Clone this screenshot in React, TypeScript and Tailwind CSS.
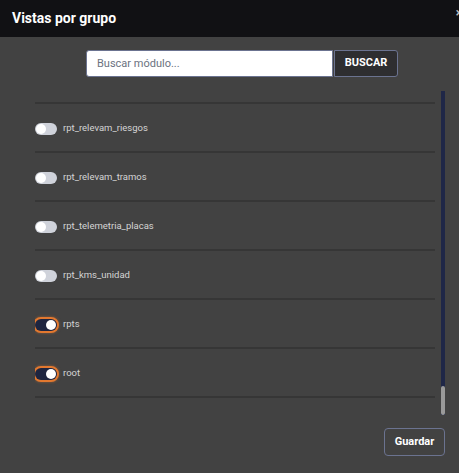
import React from 'react';

const items = [
  { name: 'rpt_relevam_zonas', on: false },
  { name: 'rpt_relevam_riesgos', on: false },
  { name: 'rpt_relevam_tramos', on: false },
  { name: 'rpt_telemetria_placas', on: false },
  { name: 'rpt_kms_unidad', on: false },
  { name: 'rpts', on: true },
  { name: 'root', on: true },
];

function Toggle({ on }: { on: boolean }) {
  return (
    <span
      className={`relative inline-flex h-[12px] w-[22px] shrink-0 items-center rounded-full ${
        on
          ? 'bg-[#1e2540] ring-2 ring-[#e2782f] shadow-[0_0_3px_2px_rgba(226,120,47,0.5)]'
          : 'bg-[#cfd2da]'
      }`}
    >
      <span
        className={`absolute h-[10px] w-[10px] rounded-full bg-white ${on ? 'right-[1px]' : 'left-[1px]'}`}
      />
    </span>
  );
}

export default function App() {
  return (
    <div className="h-[473px] w-[459px] overflow-hidden bg-[#424242] font-['Roboto',sans-serif]">
      {/* Header */}
      <div className="relative flex h-[37px] items-center bg-[#111114] px-3 pb-[1px]">
        <h2 className="text-[14px] font-bold text-white">Vistas por grupo</h2>
        <span className="absolute right-[-3px] top-[4px] text-[12px] font-bold text-[#bbbbbb]">×</span>
      </div>

      {/* Search */}
      <div className="flex pl-[86px] pt-[13px]">
        <input
          className="h-[27px] w-[247px] rounded-l-[3px] border border-[#6b7390] bg-white px-[10px] text-[11px] leading-[25px] text-[#333] outline-none placeholder:text-[#6b7280]"
          placeholder="Buscar módulo..."
        />
        <button className="ml-[1px] h-[27px] w-[64px] rounded-r-[3px] border border-[#6b7390] bg-[#2e2e30] text-[11px] font-bold text-white">
          BUSCAR
        </button>
      </div>

      {/* List */}
      <div className="mt-[14px] flex h-[324px] pl-[35px] pr-[14px]">
        <div className="flex-1 overflow-hidden pr-[6px]">
          <div className="-mt-[36px]">
            {items.map((item) => (
              <div
                key={item.name}
                className="flex h-[49px] items-center gap-[6px] border-b-2 border-[#363636] pt-[2px]"
              >
                <Toggle on={item.on} />
                <span className="text-[9.5px] text-[#d4d4d4]">{item.name}</span>
              </div>
            ))}
          </div>
        </div>
        <div className="flex w-[4px] flex-col bg-[#1f2747]">
          <div className="flex-1" />
          <div className="h-[29px] rounded-[2px] bg-[#9a9a9a]" />
        </div>
      </div>

      {/* Footer */}
      <div className="flex justify-end pr-[14px] pt-[13px]">
        <button className="h-[28px] w-[61px] rounded-[4px] border border-[#6b7390] text-[11px] font-bold text-white">
          Guardar
        </button>
      </div>
    </div>
  );
}
